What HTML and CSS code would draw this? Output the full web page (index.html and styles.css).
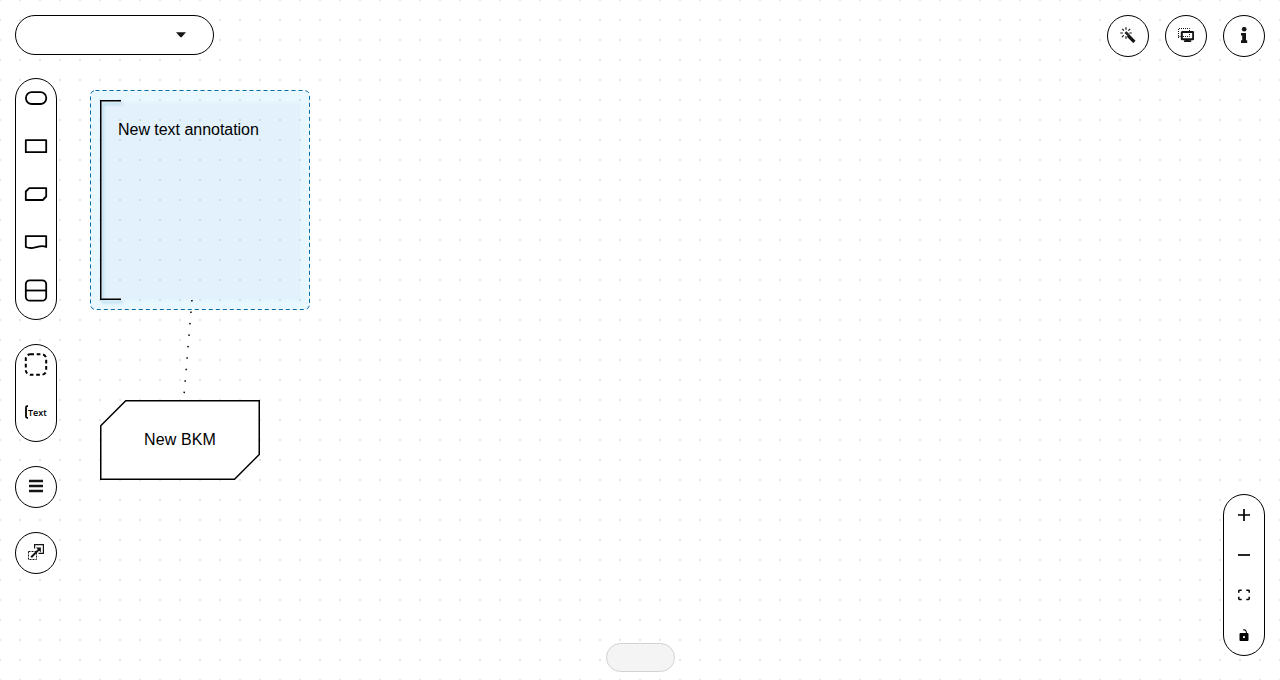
FILE: index.html
```html
<!DOCTYPE html>
<html lang="en">
<head>
<meta charset="utf-8">
<title>DMN Editor</title>
<link rel="stylesheet" href="styles.css">
</head>
<body>
<div class="editor">
  <svg class="canvas" width="1280" height="680">
    <defs>
      <pattern id="dots" x="-1" y="-1" width="20" height="20" patternUnits="userSpaceOnUse"><rect class="dot" width="2" height="2"/></pattern>
    </defs>
    <rect width="1280" height="680" fill="url(#dots)"/>
    <rect class="selection" x="90.5" y="90.5" width="219" height="219" rx="5"/>
    <g class="annotation">
      <rect class="annotation-fill" x="100" y="101" width="200" height="198"/>
      <path class="outline" d="M121 100.75H100.75V299.25H121"/>
    </g>
    <path class="edge" d="M191.97 300L183.6 400"/>
    <path class="outline node" d="M125.75 400.75H259.25V454.5L234.5 479.25H100.75V425.75Z"/>
  </svg>
  <div class="label annotation-label">New text annotation</div>
  <div class="label bkm-label">New BKM</div>

  <div class="overlay">
    <header class="topbar">
      <div class="pill dropdown"><svg width="10" height="6"><path d="M0 .3H10L5.8 4.9Q5 5.7 4.2 4.9Z"/></svg></div>
      <div class="actions">
        <div class="pill round"><svg width="16" height="16"><path class="thick" d="M8 8.5L14.4 14.9"/><path class="hair" d="M5 5.5L8 8.5M6 4.7L9 7.7M6 .3V2.8M2.2 1.8L3.9 3.5M.3 6H2.8M2 10.2L3.8 8.4M6 9.3V11.8M8.4 3.6L10.2 1.8M9.3 6H11.8"/></svg></div>
        <div class="pill round"><svg width="16" height="14"><path class="dotted" d="M.5 10V.5H11.5V3M.5 8.5H3"/><rect class="monitor" x="3.8" y="4" width="11.4" height="7.2" rx=".5"/><path class="dotted" d="M5 8.5H11.5V5"/><path d="M7.5 11.5H11.5V12.3H13.2V14H6V12.3H7.5Z"/></svg></div>
        <div class="pill round"><svg width="8" height="16"><circle cx="4.2" cy="2.2" r="2.3"/><path d="M1 6H6V13.2H7.2V16H1V13.2H2.2V8.6H1Z"/></svg></div>
      </div>
    </header>

    <div class="body">
      <nav class="sidebar">
        <div class="pill group nodes">
          <div class="tool"><svg width="24" height="24"><rect class="shape" x="1.9" y="6.2" width="20.4" height="11.8" rx="5.9"/></svg></div>
          <div class="tool"><svg width="24" height="24"><rect class="shape" x="1.8" y="6.2" width="20.4" height="12"/></svg></div>
          <div class="tool"><svg width="24" height="24"><path class="shape" d="M5.3 6.1H22.2V14.5L18.8 18H1.8V9.5Z"/></svg></div>
          <div class="tool"><svg width="24" height="24"><path class="shape" d="M1.8 6.1H22.2V17C16 14 13 18.5 7 18Q4 17.9 1.8 17Z"/></svg></div>
          <div class="tool"><svg width="24" height="24"><rect class="shape" x="1.8" y="2.3" width="20.4" height="20.4" rx="4"/><path class="shape" d="M2 12.5H22"/></svg></div>
        </div>
        <div class="pill group">
          <div class="tool"><svg width="24" height="24"><rect class="shape dash" x="1.8" y="2.3" width="20.4" height="20.4" rx="4.5"/></svg></div>
          <div class="tool bracket"><svg width="4" height="24"><path class="shape" d="M4 6.2H3.2Q2 6.2 2 7.7V16.3Q2 17.8 3.2 17.8H4"/></svg><span class="tiny">Text</span></div>
        </div>
        <div class="pill round"><svg width="14" height="14"><path class="bars" d="M0 2H14M0 7H14M0 12H14"/></svg></div>
        <div class="pill round"><svg width="16" height="16"><path class="hair dashes" d="M.5 7.5H8.5V15.5H.5Z"/><path class="box" d="M6.6 4.5V.6H15.4V9.4H10.5"/><path class="arrow" d="M3.2 13.2L11 5.4"/><path d="M8 3.5H12.9V8.4Z"/></svg></div>
      </nav>
      <div class="status"></div>
      <div class="pill controls">
        <div class="control"><svg width="12" height="12"><path class="plus" d="M0 6H12M6 0V12"/></svg></div>
        <div class="control"><svg width="12" height="12"><path class="plus" d="M0 6H12"/></svg></div>
        <div class="control"><svg width="12" height="12"><path class="corners" d="M.8 3.7V2Q.8 1.3 1.5 1.3H3.7M8.3 1.3H10.5Q11.2 1.3 11.2 2V3.7M11.2 7.8V9.8Q11.2 10.5 10.5 10.5H8.3M3.7 10.5H1.5Q.8 10.5 .8 9.8V7.8"/></svg></div>
        <div class="control"><svg width="10" height="12"><path class="lock" fill-rule="evenodd" d="M1.5 4H8.5Q9.5 4 9.5 5V11Q9.5 12 8.5 12H1.5Q.5 12 .5 11V5Q.5 4 1.5 4M5 7A1.1 1.1 0 1 0 5 9.2A1.1 1.1 0 0 0 5 7"/><path class="shackle" d="M4.2 1Q7.4 .1 7.4 4"/></svg></div>
      </div>
    </div>
  </div>
</div>
</body>
</html>
```
FILE: styles.css
```css
* { box-sizing: border-box; }
body { margin: 0; background: #fff; font-family: "Liberation Sans", Arial, sans-serif; }
.editor { position: relative; width: 1280px; height: 680px; overflow: hidden; }
.canvas { position: absolute; inset: 0; }
.dot { fill: #e7e7e7; }
.selection { fill: #0af; fill-opacity: .085; stroke: #006ba4; stroke-width: 1; stroke-dasharray: 4 3; }
.annotation { filter: drop-shadow(2px 3px 1.5px rgba(0, 107, 164, .28)); }
.annotation-fill { fill: rgba(200, 205, 225, .07); }
.outline { fill: none; stroke: #000; stroke-width: 1.5; }
.outline.node { fill: rgba(255, 255, 255, .9); }
.edge { fill: none; stroke: #000; stroke-width: 1.5; stroke-dasharray: 1.5 10; }
.label { position: absolute; font-size: 16px; line-height: 18px; color: #000; white-space: nowrap; }
.annotation-label { left: 118px; top: 121px; letter-spacing: -.03px; }
.bkm-label { left: 100px; top: 431px; width: 160px; text-align: center; letter-spacing: .12px; }

.overlay { position: relative; height: 100%; padding: 15px 15px 0; display: flex; flex-direction: column; gap: 21px; }
.topbar, .body { display: flex; justify-content: space-between; }
.topbar { height: 42px; align-items: flex-start; }
.body { height: 602px; align-items: flex-end; }
.actions { display: flex; gap: 16px; }
.pill { border: 1px solid #000; border-radius: 21px; background: #fff; display: flex; }
.pill svg { display: block; flex: none; fill: #151515; }
.dropdown { width: 199px; height: 40px; border-radius: 20px; justify-content: flex-end; align-items: center; padding: 0 27px 0 0; }
.round { width: 42px; height: 42px; align-items: center; justify-content: center; padding-bottom: 2px; }
.sidebar { align-self: flex-start; display: flex; flex-direction: column; gap: 24px; }
.group { width: 42px; flex-direction: column; align-items: center; gap: 24px; padding: 7px 0 17px; }
.nodes { height: 242px; }
.tool { width: 24px; height: 24px; }
.bracket { display: flex; align-items: center; }
.status { width: 69px; height: 29px; margin-bottom: 8px; border: 1px solid #d2d2d2; border-radius: 14.5px; background: #f4f4f4; }
.controls { width: 42px; flex-direction: column; margin-bottom: 24px; }
.control { height: 40px; display: flex; align-items: center; justify-content: center; }

.shape { fill: none; stroke: #000; stroke-width: 1.8; stroke-linejoin: round; }
.shape.dash { stroke-width: 2; stroke-dasharray: 3.7 2.7; }
.tiny { font: 600 9px/12px "Open Sans", sans-serif; color: #000; padding-top: 1px; }
.bars { stroke: #151515; stroke-width: 2.4; }
.hair { fill: none; stroke: #151515; stroke-width: 1.2; }
.hair.dashes { stroke-width: 1; stroke-dasharray: 2 1; }
.dotted { fill: none; stroke: #151515; stroke-width: 1; stroke-dasharray: 1 1; }
.thick { stroke: #151515; stroke-width: 3.2; }
.monitor { fill: #fff; stroke: #151515; stroke-width: 2; }
.box { fill: none; stroke: #151515; stroke-width: 1.2; }
.arrow { stroke: #151515; stroke-width: 2; }
.plus { stroke: #000; stroke-width: 1.7; }
.corners { fill: none; stroke: #000; stroke-width: 1.5; }
.lock { fill: #000; }
.shackle { fill: none; stroke: #000; stroke-width: 1.1; }
.pill svg .shape, .pill svg .shackle { fill: none; }
```
